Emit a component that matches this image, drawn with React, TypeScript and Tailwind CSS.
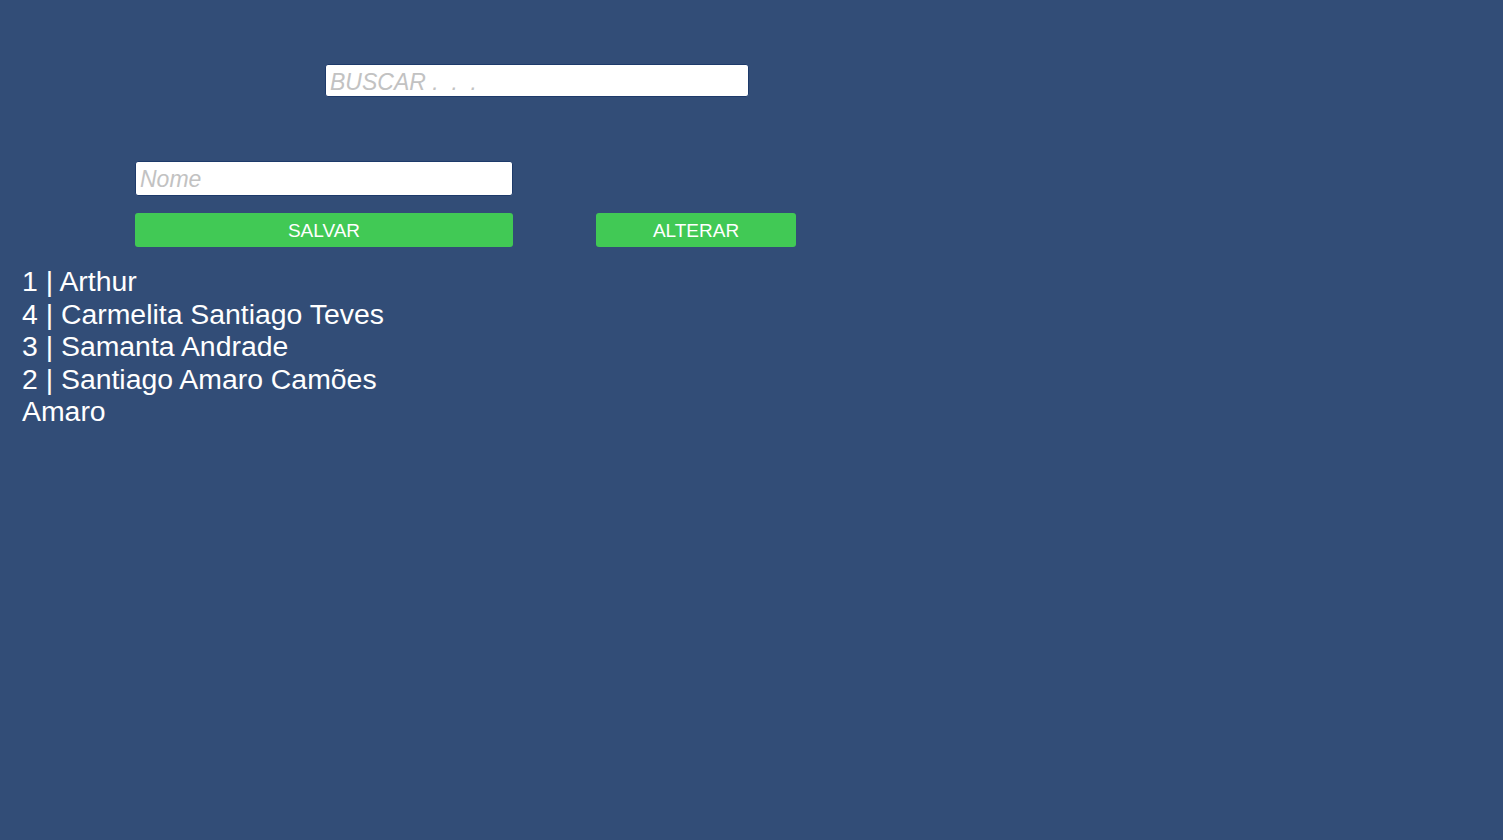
export default function App() {
  const pessoas = [
    { id: 1, nome: "Arthur" },
    { id: 4, nome: "Carmelita Santiago Teves" },
    { id: 3, nome: "Samanta Andrade" },
    { id: 2, nome: "Santiago Amaro Camões Amaro" },
  ];

  return (
    <div className="min-h-[840px] w-full bg-[#324d77] font-['Liberation_Sans',Arial,sans-serif] text-white">
      <div className="pt-[64px] pl-[325px]">
        <input
          placeholder={"BUSCAR .\u00a0\u00a0.\u00a0\u00a0."}
          className="h-[33px] w-[424px] rounded-[3px] border border-[#1d3a6a] bg-white px-[4px] pt-[3px] text-[23px] text-gray-800 outline-none placeholder:italic placeholder:text-[#c2c2c2]"
        />
      </div>

      <div className="mt-[64px] pl-[135px]">
        <input
          placeholder="Nome"
          className="h-[35px] w-[378px] rounded-[3px] border border-[#1d3a6a] bg-white px-[4px] pt-[2px] text-[23px] text-gray-800 outline-none placeholder:italic placeholder:text-[#c2c2c2]"
        />
        <div className="mt-[17px] flex gap-[83px]">
          <button className="h-[34px] w-[378px] rounded-[3px] bg-[#41c955] pt-[2px] text-[19px] text-white">
            SALVAR
          </button>
          <button className="h-[34px] w-[200px] rounded-[3px] bg-[#41c955] pt-[2px] text-[19px] text-white">
            ALTERAR
          </button>
        </div>
      </div>

      <ul className="mt-[18px] w-[420px] pl-[22px] text-[28.4px] leading-[32.5px]">
        {pessoas.map((p) => (
          <li key={p.id}>
            {p.id} | {p.nome}
          </li>
        ))}
      </ul>
    </div>
  );
}
